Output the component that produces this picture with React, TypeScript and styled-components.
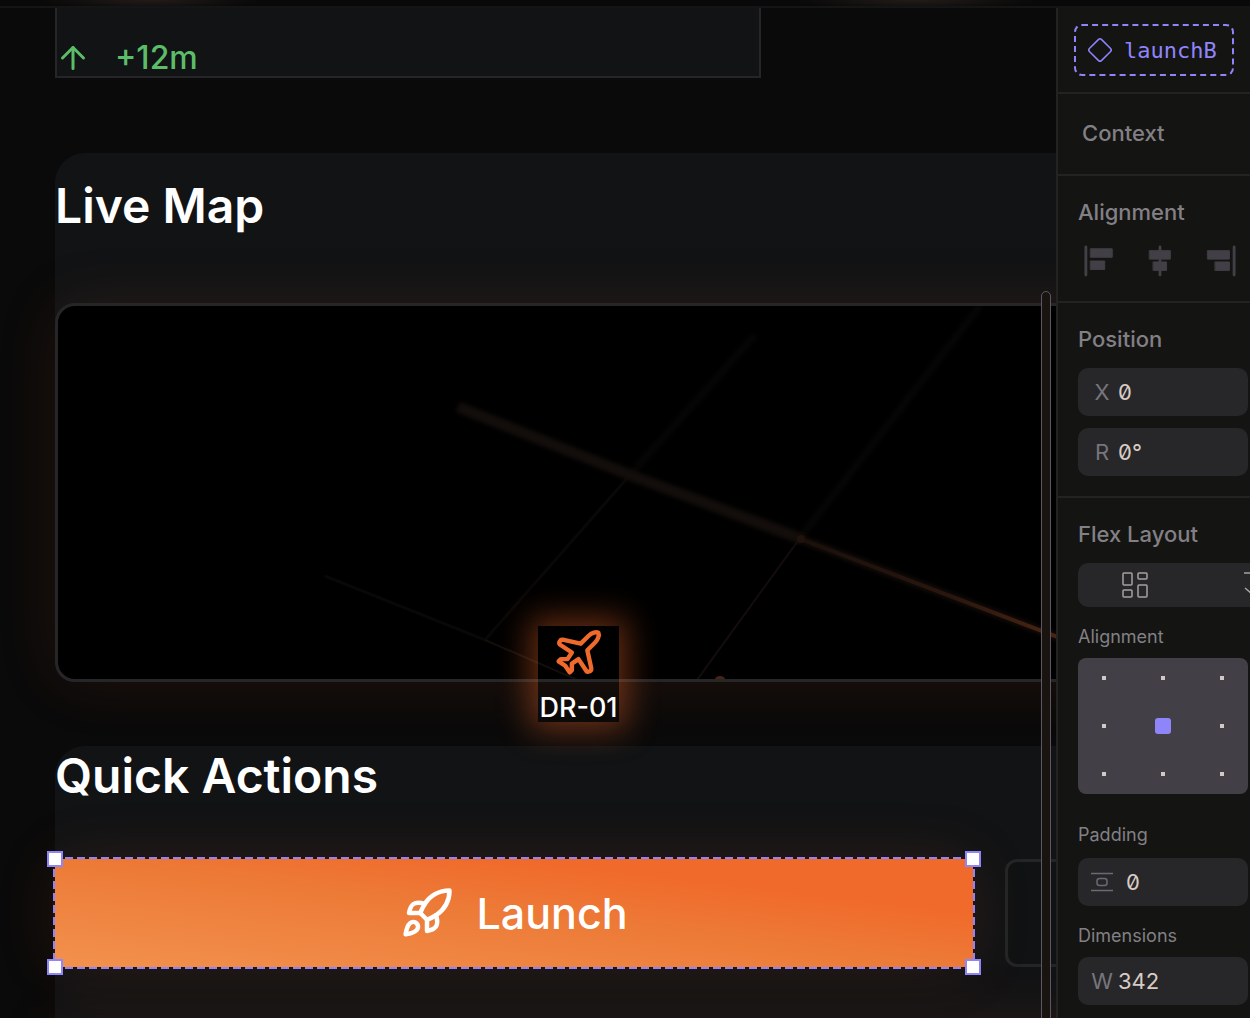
import React from "react";
import styled, { createGlobalStyle } from "styled-components";
import { ArrowUp, Plane, Rocket } from "lucide-react";

const Global = createGlobalStyle`
  * { box-sizing: border-box; }
  html, body { margin: 0; background: #0a0a0a; }
  body { font-family: Inter, "Liberation Sans", sans-serif; overflow: hidden; }
  button, input { font: inherit; color: inherit; }
  h2, h3, p { margin: 0; }
`;

const Shell = styled.div`
  display: flex;
  flex-direction: column;
  height: 100vh;
  overflow: hidden;
`;

const TopBar = styled.header`
  flex: none;
  height: 8px;
  border-bottom: 2px solid #151515;
  background:
    radial-gradient(ellipse 110px 10px at 150px 0, #221c19, transparent),
    radial-gradient(ellipse 120px 10px at 915px 0, #221c19, transparent),
    #090909;
`;

const Workspace = styled.div`
  display: flex;
  flex: 1;
  min-height: 0;
`;

const Canvas = styled.main`
  position: relative;
  flex: 1;
  min-width: 0;
  overflow: hidden;
  padding-left: 55px;
  background: #0a0a0a;
  color: #fff;
`;

const StatCard = styled.div`
  display: flex;
  align-items: center;
  gap: 24px;
  width: 706px;
  height: 70px;
  padding-top: 30px;
  box-shadow: inset 2px 0 #262628, inset -2px -2px #262628;
  background: #111315;
  color: #5bbd68;
  font-size: 32px;
  line-height: 40px;
  font-weight: 500;
`;

const Section = styled.section<{ $top: number; $gap: number }>`
  display: flex;
  flex-direction: column;
  gap: ${(p) => p.$gap}px;
  width: 1400px;
  padding-top: ${(p) => p.$top}px;
  border-radius: 30px 0 0 20px;
  background: #111315;
`;

const LiveSection = styled(Section)`
  margin-top: 75px;
`;

const ActionSection = styled(Section)`
  position: relative;
  margin-top: 64px;
  height: 400px;
`;

const Title = styled.h2`
  font-size: 48px;
  line-height: 60px;
  font-weight: 600;
`;

const MapFrame = styled.div`
  position: relative;
  height: 379px;
  border: 3px solid #262628;
  border-radius: 20px;
  background: #000;
  box-shadow: 0 0 64px rgba(240, 100, 40, 0.1);
`;

const MapLines = styled.svg`
  display: block;
`;

const Marker = styled.div`
  position: absolute;
  z-index: 1;
  left: 480px;
  top: 320px;
  display: flex;
  flex-direction: column;
  align-items: center;
  justify-content: space-between;
  width: 81px;
  height: 96px;
  color: #fff;
  font-size: 27px;
  line-height: 28px;
  font-weight: 500;
  white-space: nowrap;
  box-shadow: 0 0 32px 8px rgba(240, 106, 43, 0.42);
`;

const ActionRow = styled.div`
  display: flex;
  gap: 32px;
`;

const Selected = styled.div`
  position: relative;
  width: 918px;
  height: 108px;
  box-shadow: 0 0 64px rgba(240, 100, 40, 0.12);
`;

const LaunchButton = styled.button`
  display: flex;
  align-items: center;
  justify-content: center;
  gap: 22px;
  width: 100%;
  height: 100%;
  padding: 0;
  border: 0;
  background: linear-gradient(to top right, #f2914d 0%, #ed7a37 50%, #f06a2b 75%);
  font-size: 43px;
  font-weight: 500;
  color: #fff;
`;

const GhostButton = styled.button`
  width: 420px;
  height: 108px;
  border: 3px solid #242527;
  border-radius: 12px;
  background: #101213;
`;

const dash = (angle: string) =>
  `repeating-linear-gradient(${angle}, #8f85fb 0 8px, #24130e 8px 12px)`;

const Outline = styled.div`
  position: absolute;
  inset: -2px;
  pointer-events: none;
  background:
    ${dash("90deg")} top / 100% 2px no-repeat,
    ${dash("90deg")} bottom / 100% 2px no-repeat,
    ${dash("180deg")} left / 2px 100% no-repeat,
    ${dash("180deg")} right / 2px 100% no-repeat;
`;

const Handle = styled.span<{ $x: "left" | "right"; $y: "top" | "bottom" }>`
  position: absolute;
  ${(p) => p.$x}: -8px;
  ${(p) => p.$y}: -8px;
  width: 16px;
  height: 16px;
  border: 2px solid #8f85fb;
  background: #fff;
`;

const NextPanel = styled.div`
  height: 200px;
  box-shadow: 0 0 64px rgba(240, 100, 40, 0.1);
`;

const ScrollThumb = styled.div`
  position: absolute;
  z-index: 2;
  right: 5px;
  top: 283px;
  bottom: -10px;
  width: 10px;
  border: 1px solid #5a5862;
  border-radius: 5px;
  background: #1a1411;
`;

const Inspector = styled.aside`
  flex: none;
  width: 194px;
  overflow: hidden;
  border-left: 2px solid #232323;
  background: #141412;
  color: #828085;
`;

const Group = styled.section`
  padding: 22px 2px 20px 20px;
  border-bottom: 2px solid #232324;
`;

const ChipGroup = styled(Group)`
  padding: 16px;
`;

const ContextGroup = styled(Group)`
  padding: 25px 24px 27px;
`;

const AlignGroup = styled(Group)`
  padding-bottom: 24px;
`;

const Chip = styled.button`
  display: flex;
  align-items: center;
  gap: 10px;
  width: 100%;
  height: 52px;
  padding: 0 10px;
  border: 2px dashed #8f85fb;
  border-radius: 8px;
  background: none;
  color: #8f85fb;
  font-family: "DejaVu Sans Mono", monospace;
  font-size: 22px;
`;

const Heading = styled.h3`
  font-size: 22px;
  line-height: 28px;
  font-weight: 500;
`;

const AlignButtons = styled.div`
  display: flex;
  justify-content: space-between;
  margin-top: 19px;
  padding: 0 12px 0 6px;
`;

const IconButton = styled.button`
  display: grid;
  place-items: center;
  width: 32px;
  height: 32px;
  padding: 0;
  border: 0;
  background: none;
  color: #424046;
`;

const Fields = styled.div`
  display: flex;
  flex-direction: column;
  gap: 12px;
  margin-top: 15px;
`;

const FieldBox = styled.label<{ $gap?: number }>`
  display: flex;
  align-items: center;
  gap: ${(p) => p.$gap ?? 5}px;
  height: 48px;
  padding: 0 13px;
  border-radius: 10px;
  background: #27272a;
  font-size: 22px;
`;

const Prefix = styled.span`
  display: flex;
  justify-content: center;
  flex: none;
  width: 22px;
  color: #77757c;
`;

const FieldInput = styled.input`
  flex: 1;
  min-width: 0;
  padding: 0;
  border: 0;
  outline: 0;
  background: none;
  color: #d8ccc4;
  font-feature-settings: "zero";
`;

const Segments = styled.div`
  display: flex;
  gap: 8px;
  height: 44px;
  margin: 15px -2px 0 0;
  overflow: hidden;
  border-radius: 10px 0 0 10px;
  background: #27272a;
`;

const Segment = styled.button`
  display: grid;
  place-items: center;
  flex: 0 0 114px;
  padding: 0;
  border: 0;
  background: none;
  color: #a8a0a0;
`;

const SubLabel = styled.p<{ $top: number; $bottom: number }>`
  margin: ${(p) => p.$top}px 0 ${(p) => p.$bottom}px;
  font-size: 18px;
  line-height: 24px;
`;

const AlignGrid = styled.div`
  display: grid;
  grid-template-columns: repeat(3, 16px);
  grid-template-rows: repeat(3, 16px);
  justify-content: space-between;
  align-content: space-between;
  height: 136px;
  padding: 12px 18px;
  border-radius: 8px;
  background: #424046;
`;

const AlignDot = styled.input`
  appearance: none;
  width: 16px;
  height: 16px;
  margin: 0;
  padding: 6px;
  background: #d3c8c2 content-box;
  &:checked {
    padding: 0;
    border-radius: 3px;
    background: #8f85fb;
  }
`;

const AlignIcon = ({ kind }: { kind: "left" | "center" | "right" }) => {
  const bars = {
    left: ["M2 2v30", "M7 4h23v9H7z", "M7 17h15v9H7z"],
    center: ["M17 2v30", "M6 6h22v9H6z", "M10 18h14v9H10z"],
    right: ["M32 2v30", "M4 6h23v9H4z", "M12 18h15v9H12z"],
  }[kind];
  return (
    <svg width="32" height="32" viewBox="0 0 34 34" fill="currentColor" stroke="currentColor" strokeLinecap="round" strokeLinejoin="round">
      <path d={bars[0]} strokeWidth="3" />
      <path d={bars[1]} strokeWidth="1" />
      <path d={bars[2]} strokeWidth="1" />
    </svg>
  );
};

const Field = ({ name, prefix, value, gap }: { name: string; prefix: React.ReactNode; value: string; gap?: number }) => (
  <FieldBox $gap={gap}>
    <Prefix>{prefix}</Prefix>
    <FieldInput aria-label={name} defaultValue={value} />
  </FieldBox>
);

const places = ["top left", "top", "top right", "left", "center", "right", "bottom left", "bottom", "bottom right"];

export default function App() {
  return (
    <>
      <Global />
      <Shell>
        <TopBar />
        <Workspace>
          <Canvas>
            <StatCard>
              <ArrowUp size={36} strokeWidth={2} />
              <span>+12m</span>
            </StatCard>

            <LiveSection $top={23} $gap={67}>
              <Title>Live Map</Title>
              <MapFrame>
                <MapLines width="1000" height="373" viewBox="58 306 1000 373" fill="none">
                  <defs>
                    <filter id="soft" x="-10%" y="-10%" width="120%" height="120%" colorInterpolationFilters="sRGB">
                      <feGaussianBlur stdDeviation="2" />
                    </filter>
                    <linearGradient id="trail" gradientUnits="userSpaceOnUse" x1="790" y1="536" x2="1056" y2="636">
                      <stop offset="0" stopColor="#1a0f0b" />
                      <stop offset="0.6" stopColor="#2a160e" />
                      <stop offset="1" stopColor="#4a2413" />
                    </linearGradient>
                  </defs>
                  <path d="M630 475 755 335M800 538 980 306" stroke="#060606" strokeWidth="7" filter="url(#soft)" />
                  <path d="M325 576 485 640 630 475" stroke="#090807" strokeWidth="3" />
                  <path d="M485 640 580 681M697 680 800 538" stroke="#130e0c" strokeWidth="2" />
                  <path d="M458 407 630 475 802 539" stroke="#130e0b" strokeWidth="11" filter="url(#soft)" />
                  <path d="M798 538 1060 638" stroke="#120c09" strokeWidth="8" filter="url(#soft)" />
                  <path d="M798 538 1060 638" stroke="url(#trail)" strokeWidth="4" />
                  <circle cx="801" cy="539" r="4" fill="#21120c" />
                  <ellipse cx="720" cy="679" rx="5" ry="3" fill="#4a2212" />
                </MapLines>
                <Marker>
                  <Plane size={53} strokeWidth={2} color="#f06a2b" />
                  <span>DR-01</span>
                </Marker>
              </MapFrame>
            </LiveSection>

            <ActionSection $top={0} $gap={53}>
              <Title>Quick Actions</Title>
              <ActionRow>
                <Selected>
                  <LaunchButton type="button">
                    <Rocket size={54} strokeWidth={2} />
                    Launch
                  </LaunchButton>
                  <Outline />
                  <Handle $x="left" $y="top" />
                  <Handle $x="right" $y="top" />
                  <Handle $x="left" $y="bottom" />
                  <Handle $x="right" $y="bottom" />
                </Selected>
                <GhostButton type="button" aria-label="More" />
              </ActionRow>
              <NextPanel />
            </ActionSection>
            <ScrollThumb />
          </Canvas>

          <Inspector>
            <ChipGroup>
              <Chip type="button">
                <svg width="28" height="28" viewBox="0 0 28 28" fill="none" stroke="currentColor" strokeWidth="1.5">
                  <rect x="5.5" y="5.5" width="17" height="17" rx="2" transform="rotate(45 14 14)" />
                </svg>
                launchB
              </Chip>
            </ChipGroup>

            <ContextGroup>
              <Heading>Context</Heading>
            </ContextGroup>

            <AlignGroup>
              <Heading>Alignment</Heading>
              <AlignButtons>
                <IconButton type="button" aria-label="Align left"><AlignIcon kind="left" /></IconButton>
                <IconButton type="button" aria-label="Align center"><AlignIcon kind="center" /></IconButton>
                <IconButton type="button" aria-label="Align right"><AlignIcon kind="right" /></IconButton>
              </AlignButtons>
            </AlignGroup>

            <Group>
              <Heading>Position</Heading>
              <Fields>
                <Field name="X position" prefix="X" value="0" />
                <Field name="Rotation" prefix="R" value="0°" />
              </Fields>
            </Group>

            <Group>
              <Heading>Flex Layout</Heading>
              <Segments>
                <Segment type="button" aria-label="Free layout">
                  <svg width="26" height="26" viewBox="0 0 26 26" fill="none" stroke="currentColor" strokeWidth="1.5">
                    <rect x="1" y="1" width="9" height="12" rx="1" />
                    <rect x="16" y="1" width="9" height="6" rx="1" />
                    <rect x="1" y="18" width="9" height="7" rx="1" />
                    <rect x="16" y="13" width="9" height="12" rx="1" />
                  </svg>
                </Segment>
                <Segment type="button" aria-label="Vertical layout">
                  <svg width="26" height="26" viewBox="0 0 26 26" fill="none" stroke="currentColor" strokeWidth="1.5">
                    <path d="M0 1h26M13 6v19M1 16l12 10 12-10" />
                  </svg>
                </Segment>
              </Segments>
              <SubLabel $top={18} $bottom={9}>Alignment</SubLabel>
              <AlignGrid>
                {places.map((place) => (
                  <AlignDot key={place} type="radio" name="align" aria-label={place} defaultChecked={place === "center"} />
                ))}
              </AlignGrid>
              <SubLabel $top={29} $bottom={11}>Padding</SubLabel>
              <Field
                name="Padding"
                gap={13}
                value="0"
                prefix={
                  <svg width="22" height="20" viewBox="0 0 22 20" fill="none" stroke="#6b6974" strokeWidth="1.5">
                    <path d="M0 1.5h22M0 18.5h22" />
                    <rect x="6" y="6.5" width="10" height="7" rx="2.5" />
                  </svg>
                }
              />
              <SubLabel $top={18} $bottom={9}>Dimensions</SubLabel>
              <Field name="Width" prefix="W" value="342" />
            </Group>
          </Inspector>
        </Workspace>
      </Shell>
    </>
  );
}
